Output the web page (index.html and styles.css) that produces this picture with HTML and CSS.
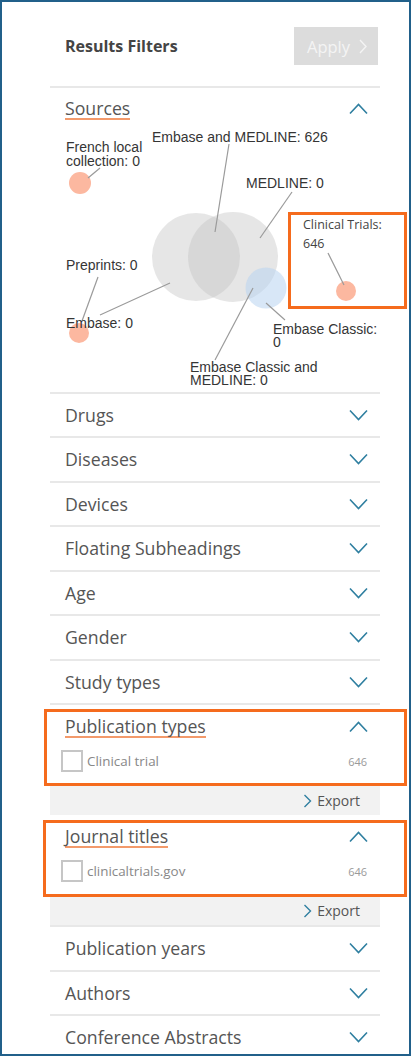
FILE: index.html
```html
<!DOCTYPE html>
<html lang="en">
<head>
<meta charset="utf-8">
<title>Results Filters</title>
<link rel="stylesheet" href="styles.css">
</head>
<body>
<div class="frame">
  <div class="panel">
    <div class="header">
      <div class="header-title">Results Filters</div>
      <button class="apply">Apply
        <svg class="apply-chev" width="8" height="15" viewBox="0 0 8 15"><path d="M1 1 L7 7.5 L1 14" fill="none" stroke="#f4f4f4" stroke-width="1.4"/></svg>
      </button>
    </div>

    <div class="sources">
      <div class="sec-head">
        <span class="sec-title">Sources</span>
        <svg class="chev" width="19" height="12" viewBox="0 0 19 12"><path d="M1 10.5 L9.5 1.5 L18 10.5" fill="none" stroke="#2f7fa0" stroke-width="1.6"/></svg>
      </div>
      <svg class="venn" width="360" height="261.5" viewBox="0 0 360 261.5">
        <g transform="translate(-50,-130)">
          <circle cx="196" cy="257" r="44" fill="#c4c4c4" fill-opacity="0.42"/>
          <circle cx="233" cy="257" r="45" fill="#c4c4c4" fill-opacity="0.42"/>
          <circle cx="266" cy="288" r="20.5" fill="#b8d4f1" fill-opacity="0.55"/>
          <circle cx="80" cy="183" r="11" fill="#fcb8a0"/>
          <circle cx="79" cy="333" r="10" fill="#fcb8a0"/>
          <circle cx="346" cy="291" r="10" fill="#fcb8a0"/>
          <g stroke="#9a9a9a" stroke-width="1.2">
            <line x1="229" y1="144" x2="215" y2="232"/>
            <line x1="100" y1="168" x2="88" y2="178"/>
            <line x1="292" y1="192" x2="260" y2="238"/>
            <line x1="98" y1="277" x2="82" y2="321"/>
            <line x1="170" y1="283" x2="100" y2="315"/>
            <line x1="266" y1="303" x2="285" y2="320"/>
            <line x1="253" y1="288" x2="215" y2="360"/>
            <line x1="328" y1="253" x2="344" y2="285"/>
          </g>
          <g class="vl">
            <text x="152" y="142">Embase and MEDLINE: 626</text>
            <text x="66" y="152">French local</text>
            <text x="66" y="165.5">collection: 0</text>
            <text x="246" y="188">MEDLINE: 0</text>
            <text x="66" y="270">Preprints: 0</text>
            <text x="66" y="328">Embase: 0</text>
            <text x="273" y="333.5">Embase Classic:</text>
            <text x="273" y="347">0</text>
            <text x="190" y="371.5">Embase Classic and</text>
            <text x="190" y="385">MEDLINE: 0</text>
          </g>
          <g class="ct">
            <text x="303" y="229">Clinical Trials:</text>
            <text x="303" y="248">646</text>
          </g>
          <rect x="289.5" y="213.5" width="116" height="94" fill="none" stroke="#f56b1d" stroke-width="3"/>
        </g>
      </svg>
    </div>

    <div class="row"><span class="row-title">Drugs</span><svg class="chev" width="19" height="12" viewBox="0 0 19 12"><path d="M1 1.5 L9.5 10.5 L18 1.5" fill="none" stroke="#2f7fa0" stroke-width="1.6"/></svg></div>
    <div class="row"><span class="row-title">Diseases</span><svg class="chev" width="19" height="12" viewBox="0 0 19 12"><path d="M1 1.5 L9.5 10.5 L18 1.5" fill="none" stroke="#2f7fa0" stroke-width="1.6"/></svg></div>
    <div class="row"><span class="row-title">Devices</span><svg class="chev" width="19" height="12" viewBox="0 0 19 12"><path d="M1 1.5 L9.5 10.5 L18 1.5" fill="none" stroke="#2f7fa0" stroke-width="1.6"/></svg></div>
    <div class="row"><span class="row-title">Floating Subheadings</span><svg class="chev" width="19" height="12" viewBox="0 0 19 12"><path d="M1 1.5 L9.5 10.5 L18 1.5" fill="none" stroke="#2f7fa0" stroke-width="1.6"/></svg></div>
    <div class="row"><span class="row-title">Age</span><svg class="chev" width="19" height="12" viewBox="0 0 19 12"><path d="M1 1.5 L9.5 10.5 L18 1.5" fill="none" stroke="#2f7fa0" stroke-width="1.6"/></svg></div>
    <div class="row"><span class="row-title">Gender</span><svg class="chev" width="19" height="12" viewBox="0 0 19 12"><path d="M1 1.5 L9.5 10.5 L18 1.5" fill="none" stroke="#2f7fa0" stroke-width="1.6"/></svg></div>
    <div class="row"><span class="row-title">Study types</span><svg class="chev" width="19" height="12" viewBox="0 0 19 12"><path d="M1 1.5 L9.5 10.5 L18 1.5" fill="none" stroke="#2f7fa0" stroke-width="1.6"/></svg></div>

    <div class="open-sec">
      <div class="open-body">
        <div class="sec-head open-head">
          <span class="sec-title">Publication types</span>
          <svg class="chev" width="19" height="12" viewBox="0 0 19 12"><path d="M1 10.5 L9.5 1.5 L18 10.5" fill="none" stroke="#2f7fa0" stroke-width="1.6"/></svg>
        </div>
        <div class="item"><span class="checkbox"></span><span class="item-label">Clinical trial</span><span class="item-count">646</span></div>
        <div class="hl hl-pub"></div>
      </div>
      <div class="strip"><svg width="9" height="14" viewBox="0 0 9 14"><path d="M1.5 1 L7.5 7 L1.5 13" fill="none" stroke="#2f7fa0" stroke-width="1.4"/></svg><span>Export</span></div>
    </div>

    <div class="open-sec last-open">
      <div class="open-body">
        <div class="sec-head open-head">
          <span class="sec-title">Journal titles</span>
          <svg class="chev" width="19" height="12" viewBox="0 0 19 12"><path d="M1 10.5 L9.5 1.5 L18 10.5" fill="none" stroke="#2f7fa0" stroke-width="1.6"/></svg>
        </div>
        <div class="item"><span class="checkbox"></span><span class="item-label">clinicaltrials.gov</span><span class="item-count">646</span></div>
        <div class="hl hl-jt"></div>
      </div>
      <div class="strip"><svg width="9" height="14" viewBox="0 0 9 14"><path d="M1.5 1 L7.5 7 L1.5 13" fill="none" stroke="#2f7fa0" stroke-width="1.4"/></svg><span>Export</span></div>
    </div>

    <div class="row"><span class="row-title">Publication years</span><svg class="chev" width="19" height="12" viewBox="0 0 19 12"><path d="M1 1.5 L9.5 10.5 L18 1.5" fill="none" stroke="#2f7fa0" stroke-width="1.6"/></svg></div>
    <div class="row"><span class="row-title">Authors</span><svg class="chev" width="19" height="12" viewBox="0 0 19 12"><path d="M1 1.5 L9.5 10.5 L18 1.5" fill="none" stroke="#2f7fa0" stroke-width="1.6"/></svg></div>
    <div class="row"><span class="row-title">Conference Abstracts</span><svg class="chev" width="19" height="12" viewBox="0 0 19 12"><path d="M1 1.5 L9.5 10.5 L18 1.5" fill="none" stroke="#2f7fa0" stroke-width="1.6"/></svg></div>
  </div>
</div>
</body>
</html>
```
FILE: styles.css
```css
* { box-sizing: border-box; }
html, body { margin: 0; padding: 0; background: #fff; }
body { width: 411px; height: 1056px; font-family: "Open Sans", "Noto Sans", sans-serif; color: #555; }

.frame {
  width: 411px;
  height: 1056px;
  border: 2px solid #21608a;
  overflow: hidden;
}

.panel {
  width: 330px;
  margin-left: 48px;
}

.header {
  display: flex;
  justify-content: space-between;
  align-items: center;
  padding: 25px 2px 21px 15px;
  border-bottom: 2px solid #e8e8e8;
}
.header-title {
  font-weight: 700;
  font-size: 16px;
  color: #444;
}
.apply {
  width: 84px;
  height: 38px;
  border: 0;
  background: #dcdcdc;
  color: #f4f4f4;
  font-family: "Open Sans", sans-serif;
  font-size: 16.5px;
  display: flex;
  align-items: center;
  padding: 0 0 0 13px;
  gap: 9px;
}
.apply-chev { display: block; }

.sources { border-bottom: 2px solid #e8e8e8; }

.sec-head {
  height: 42px;
  display: flex;
  justify-content: space-between;
  align-items: center;
  padding: 0 12px 0 15px;
}
.sec-title {
  display: inline-block;
  font-size: 17.7px;
  line-height: 20px;
  color: #555;
  border-bottom: 2px solid #f39a6b;
}
.chev { display: block; }

.venn { display: block; overflow: visible; }
.vl text { font-family: "Liberation Sans", Arial, sans-serif; font-size: 14px; fill: #353535; }
.ct text { font-family: "Open Sans", sans-serif; font-size: 12.5px; fill: #444; }

.row {
  height: 44.5px;
  display: flex;
  justify-content: space-between;
  align-items: center;
  padding: 0 12px 0 15px;
  border-bottom: 2px solid #e8e8e8;
}
.row-title { font-size: 17.7px; color: #555; }

.open-body {
  position: relative;
  padding-bottom: 13px;
}
.open-head { height: 44px; }
.item {
  height: 24px;
  display: flex;
  align-items: center;
  padding: 0 13px 0 11px;
}
.checkbox {
  width: 22px;
  height: 22px;
  border: 2px solid #c6c6c6;
  background: #fff;
}
.item-label {
  margin-left: 4px;
  font-size: 13.4px;
  color: #888;
}
.item-count {
  margin-left: auto;
  font-size: 11px;
  color: #9a9a9a;
}
.hl {
  position: absolute;
  left: -6px;
  right: -27px;
  border: 3px solid #f56b1d;
  pointer-events: none;
}
.hl-pub { top: 4px; bottom: 0; }
.hl-jt { top: 5px; bottom: -1px; left: -7px; }

.strip {
  height: 29px;
  background: #f2f2f2;
  display: flex;
  justify-content: flex-end;
  align-items: center;
  gap: 5px;
  padding-right: 20px;
  font-size: 14px;
  color: #555;
}
.strip svg { display: block; }
.last-open { border-bottom: 2px solid #e8e8e8; }
```
